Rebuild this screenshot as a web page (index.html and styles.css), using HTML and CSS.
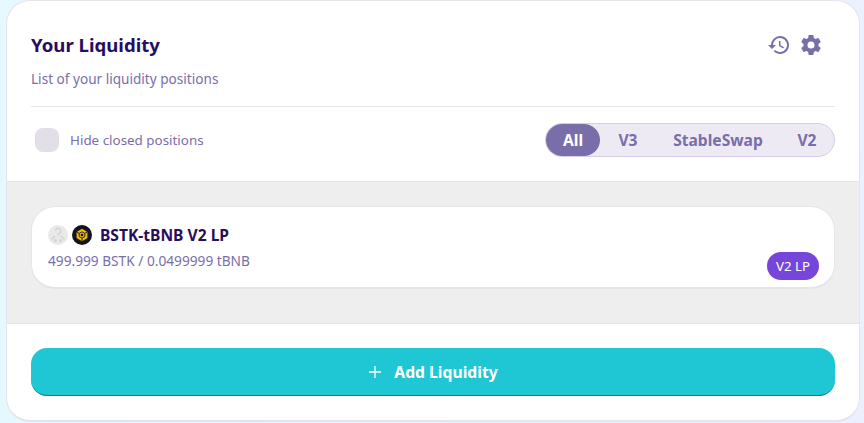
FILE: index.html
```html
<!DOCTYPE html>
<html lang="en">
<head>
<meta charset="utf-8">
<title>Your Liquidity</title>
<link rel="stylesheet" href="styles.css">
</head>
<body>
<main class="card">
  <section class="head">
    <div class="head-top">
      <div>
        <h1 class="title">Your Liquidity</h1>
        <p class="subtitle">List of your liquidity positions</p>
      </div>
      <div class="tools">
        <svg class="tool" viewBox="0 0 24 24" width="24" height="24"><path d="M13 3a9 9 0 0 0-9 9H1l3.89 3.89.07.14L9 12H6a7 7 0 1 1 2.05 4.95l-1.42 1.42A9 9 0 1 0 13 3zm-1 5v5l4.28 2.54.72-1.21-3.5-2.08V8H12z"/></svg>
        <svg class="tool" viewBox="0 0 24 24" width="24" height="24"><path d="M19.43 12.98c.04-.32.07-.64.07-.98s-.03-.66-.07-.98l2.11-1.65c.19-.15.24-.42.12-.64l-2-3.46c-.12-.22-.39-.3-.61-.22l-2.49 1c-.52-.4-1.08-.73-1.69-.98l-.38-2.65A.49.49 0 0 0 14 2h-4c-.25 0-.46.18-.49.42l-.38 2.65c-.61.25-1.17.59-1.69.98l-2.49-1a.5.5 0 0 0-.61.22l-2 3.46c-.13.22-.07.49.12.64l2.11 1.65c-.04.32-.07.65-.07.98s.03.66.07.98l-2.11 1.65c-.19.15-.24.42-.12.64l2 3.46c.12.22.39.3.61.22l2.49-1c.52.4 1.08.73 1.69.98l.38 2.65c.03.24.24.42.49.42h4c.25 0 .46-.18.49-.42l.38-2.65c.61-.25 1.17-.59 1.69-.98l2.49 1c.23.09.49 0 .61-.22l2-3.46c.12-.22.07-.49-.12-.64l-2.11-1.65zM12 15.5a3.5 3.5 0 1 1 0-7 3.5 3.5 0 0 1 0 7z"/></svg>
      </div>
    </div>
    <div class="rule"></div>
    <div class="filters">
      <label class="hide">
        <span class="check"></span>
        <span class="hide-text">Hide closed positions</span>
      </label>
      <nav class="tabs">
        <span class="tab tab-on">All</span>
        <span class="tab tab-v3">V3</span>
        <span class="tab tab-ss">StableSwap</span>
        <span class="tab tab-v2">V2</span>
      </nav>
    </div>
  </section>
  <section class="list">
    <article class="pos">
      <div class="pos-head">
        <svg class="coin" viewBox="0 0 20 20" width="20" height="20">
          <circle cx="10" cy="10" r="10" fill="#e9e9e9"/>
          <path d="M7.500 6a2.600 2.600 0 1 1 3.800 2.300c-.8.400-1.300.9-1.300 1.900M3.500 14.500l3.500-3.500M16.500 14.500l-3.500-3.500" fill="none" stroke="#d2d2d2" stroke-width="1.300"/>
          <circle cx="7.500" cy="15.500" r="1.200" fill="#cccccc"/>
          <circle cx="12.500" cy="15.500" r="1.200" fill="#cccccc"/>
        </svg>
        <svg class="coin" viewBox="0 0 20 20" width="20" height="20">
          <circle cx="10" cy="10" r="10" fill="#14151a"/>
          <path d="M10 3.800l5.400 3.100v6.200L10 16.200l-5.400-3.100V6.900z" fill="#f0b90b"/>
          <path d="M10 6.800l2.800 1.600v3.200L10 13.200l-2.800-1.600V8.400zM4.600 6.900l2.600 1.500M15.400 6.900l-2.600 1.500M10 16.200v-3" fill="none" stroke="#14151a" stroke-width=".9"/>
          <circle cx="10" cy="10" r="1.300" fill="#14151a"/>
        </svg>
        <span class="pos-name">BSTK-tBNB V2 LP</span>
      </div>
      <div class="pos-foot">
        <span class="pos-amount">499.999 BSTK / 0.0499999 tBNB</span>
        <span class="badge">V2 LP</span>
      </div>
    </article>
  </section>
  <section class="foot">
    <button class="add" type="button">
      <svg class="plus" viewBox="0 0 14 14" width="14" height="14"><path d="M7 1v12M1 7h12" fill="none" stroke="#fff" stroke-width="1.300"/></svg>
      <span>Add Liquidity</span>
    </button>
  </section>
</main>
</body>
</html>
```
FILE: styles.css
```css
* { box-sizing: border-box; }
html, body { height: 100%; }
body {
  margin: 0;
  padding: 0 4px 0 6px;
  overflow: hidden;
  background: linear-gradient(100deg, #e6f9ff 0%, #ebf0ff 100%);
  font-family: "Noto Sans", "Open Sans", sans-serif;
}
.card {
  width: 854px;
  height: 422px;
  background: #fff;
  border: 1px solid #e7e3eb;
  border-bottom-width: 2px;
  border-radius: 24px;
  overflow: hidden;
  display: flex;
  flex-direction: column;
}
.head { height: 180px; padding: 0 24px; flex: none; }
.head-top { height: 105px; display: flex; justify-content: space-between; align-items: flex-start; }
.title {
  margin: 32px 0 0;
  font-size: 18.600px;
  line-height: 24px;
  font-weight: 700;
  color: #280d5f;
}
.subtitle { margin: 12px 0 0; font-size: 13.600px; line-height: 20px; color: #7a6eaa; }
.tools { display: flex; gap: 8px; margin: 32px 0 0; padding-right: 12px; }
.tool { fill: #7a6eaa; display: block; }
.rule { height: 1px; background: #e7e3eb; }
.filters { height: 74px; display: flex; justify-content: space-between; align-items: center; padding-bottom: 8px; }
.hide { display: flex; align-items: center; gap: 11px; padding-left: 4px; }
.check { width: 24px; height: 24px; border-radius: 8px; background: #e2dfe9; display: block; }
.hide-text { font-size: 13.400px; line-height: 20px; color: #7a6eaa; }
.tabs {
  width: 290px;
  height: 34px;
  display: flex;
  align-items: center;
  background: #eeeaf4;
  border: 1px solid #d7caec;
  border-radius: 17px;
}
.tab { font-size: 15.600px; font-weight: 700; color: #7a6eaa; line-height: 32px; text-align: center; }
.tab-on { width: 54px; background: #7a6eaa; color: #fff; border-radius: 16px; }
.tab-v3 { width: 56px; }
.tab-ss { width: 124px; }
.tab-v2 { width: 54px; }
.list {
  height: 143px;
  flex: none;
  background: #eeeeee;
  border-top: 1px solid #e7e3eb;
  border-bottom: 1px solid #e7e3eb;
  padding: 24px 24px 0;
}
.pos {
  height: 83px;
  background: #fff;
  border: 1px solid #e7e3eb;
  border-bottom-width: 2px;
  border-radius: 24px;
  padding: 17px 15px 0 16px;
}
.pos-head { display: flex; align-items: center; gap: 4px; height: 22px; }
.coin { display: block; }
.pos-name { margin-left: 4px; font-size: 15.600px; font-weight: 700; color: #280d5f; line-height: 22px; }
.pos-foot { display: flex; justify-content: space-between; align-items: flex-start; margin-top: 5px; }
.pos-amount { font-size: 13.700px; line-height: 20px; color: #7a6eaa; }
.badge {
  width: 52px;
  height: 28px;
  margin-top: 1px;
  border-radius: 14px;
  background: #7645d9;
  color: #fff;
  font-size: 13.300px;
  line-height: 28px;
  text-align: center;
}
.foot { flex: 1; padding: 24px 24px 0; }
.add {
  width: 100%;
  height: 48px;
  border: 0;
  border-bottom: 1px solid #0e7f8c;
  border-radius: 16px;
  background: #1fc7d4;
  color: #fff;
  font-family: inherit;
  font-size: 15.700px;
  font-weight: 700;
  display: flex;
  align-items: center;
  justify-content: center;
  gap: 12px;
}
.plus { display: block; }
```
